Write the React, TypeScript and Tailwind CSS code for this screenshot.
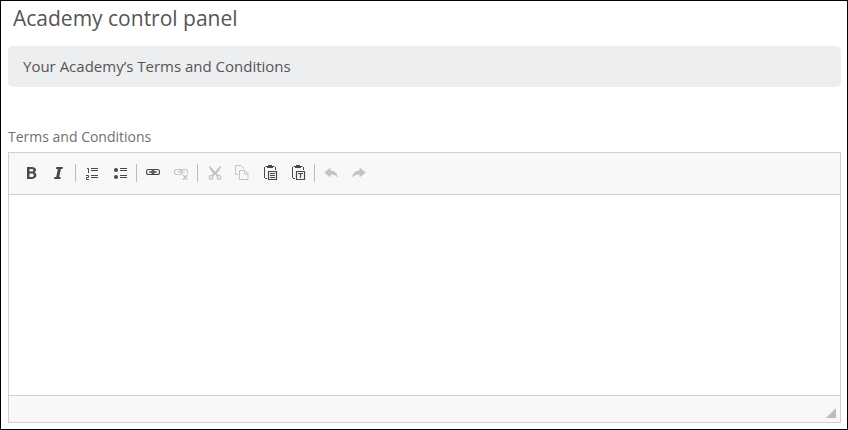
import type { ReactNode } from "react";

interface ToolButtonProps {
  label: string;
  disabled?: boolean;
  children: ReactNode;
}

function ToolButton({ label, disabled, children }: ToolButtonProps) {
  return (
    <button
      type="button"
      aria-label={label}
      disabled={disabled}
      className={
        disabled
          ? "flex h-6 w-7 items-center justify-center text-[#c3c3c3]"
          : "flex h-6 w-7 items-center justify-center text-[#484848]"
      }
    >
      <svg width="16" height="16" viewBox="0 0 16 16" fill="none" stroke="currentColor">
        {children}
      </svg>
    </button>
  );
}

function Separator() {
  return <span className="mx-0.5 h-[18px] w-px bg-[#bcbcbc]" />;
}

function ClipboardShape() {
  return (
    <>
      <path d="M5 1.5H3.5M2.5 2v11M3 13.5h2M11 1.5h1.5M13.5 2v3" />
      <path d="M6 0h4v1h1v2H5V1h1z" fill="currentColor" stroke="none" />
      <path d="M6.5 6.5h8v8h-8z" strokeWidth="1.2" />
    </>
  );
}

function Toolbar() {
  return (
    <div className="flex h-[42px] items-center border-b border-[#d1d1d1] bg-[#f8f8f8] pb-px pl-2">
      <ToolButton label="Bold">
        <path
          d="M4 2h4.4C11.3 2 13 3 13 5c0 1.2-.6 2.1-1.7 2.4 1.300.3 2.100 1.200 2.100 2.700 0 2.300-1.700 3.900-4.500 3.900H4zm2.500 2v2.500h1.900c1.300 0 2-.4 2-1.300S9.700 4 8.300 4zm0 4.500V12h2.200c1.300 0 2.100-.6 2.100-1.800 0-1.100-.8-1.700-2.200-1.700z"
          fill="currentColor"
          fillRule="evenodd"
          stroke="none"
        />
      </ToolButton>
      <div className="-ml-px mr-px">
        <ToolButton label="Italic">
          <path
            d="M6.3 2H13l-.5 2h-1.6L9.2 12h1.6l-.5 2H4l.5-2h1.7L7.9 4H5.900z"
            fill="currentColor"
            stroke="none"
          />
        </ToolButton>
      </div>
      <Separator />
      <ToolButton label="Numbered list">
        <path d="M7 3.500h7M7 5.500h7M7 10.500h7M7 12.500h7" />
        <path d="M3 3.500h1.500V8M2 10.500h2.500v2h-2v2H5" />
      </ToolButton>
      <ToolButton label="Bulleted list">
        <path d="M8 3.500h7M8 5.500h7M8 10.500h7M8 12.500h7" />
        <circle cx="4" cy="5" r="2" fill="currentColor" stroke="none" />
        <circle cx="4" cy="12" r="2" fill="currentColor" stroke="none" />
      </ToolButton>
      <Separator />
      <ToolButton label="Link">
        <rect x="1.5" y="4.5" width="7.500" height="5" rx="2" strokeWidth="1.100" />
        <rect x="7" y="4.5" width="7.500" height="5" rx="2" strokeWidth="1.100" />
        <path d="M4 7h8" strokeWidth="1.300" />
      </ToolButton>
      <ToolButton label="Unlink" disabled>
        <path d="M9 9.500H3.500a2 2 0 0 1-2-2v-1a2 2 0 0 1 2-2h9a2 2 0 0 1 2 2V8.500" strokeWidth="1.100" />
        <path d="M4 7h8M7.500 5v1.500M9 5v1.500M8.500 7.500v2" strokeWidth="1.100" />
        <path d="M10 10l4.500 4.800M14.500 10L10 14.800" strokeWidth="1.500" />
      </ToolButton>
      <Separator />
      <ToolButton label="Cut" disabled>
        <path d="M3 1l1.500.6L9 6.800l4.500-5.200L15 1c-.2 2.400-1.600 4.800-4.300 7.200l1.800 1.900-1.400 1.300L9 9.600l-2.100 1.800-1.400-1.300 1.800-1.900C4.600 5.800 3.200 3.400 3 1z" fill="currentColor" stroke="none" />
        <circle cx="5" cy="12.500" r="1.800" strokeWidth="1.300" />
        <circle cx="13" cy="12.500" r="1.800" strokeWidth="1.300" />
      </ToolButton>
      <ToolButton label="Copy" disabled>
        <path d="M4.500 9.500h-3v-9h5.500l2.500 2.500v1" />
        <path d="M5.500 5.500h5.500l3 3v6H5.500zM10.500 5.500V9H14" />
      </ToolButton>
      <ToolButton label="Paste">
        <ClipboardShape />
        <path d="M8 8.500h5M8 10.500h5M8 12.500h5" />
      </ToolButton>
      <ToolButton label="Paste as plain text">
        <ClipboardShape />
        <path d="M8 8.500h5M10.500 8.500V13" strokeWidth="1.200" />
      </ToolButton>
      <Separator />
      <ToolButton label="Undo" disabled>
        <path d="M1.200 7.500L7.500 2.500v3c4 .2 7 2.500 7.300 7.300-1.800-2.200-3.800-3.200-7.300-3.200v3z" fill="currentColor" stroke="none" />
      </ToolButton>
      <ToolButton label="Redo" disabled>
        <path d="M14.800 7.500L8.500 2.500v3c-4 .2-7 2.500-7.300 7.300 1.800-2.200 3.800-3.200 7.300-3.200v3z" fill="currentColor" stroke="none" />
      </ToolButton>
    </div>
  );
}

export default function App() {
  return (
    <main className="h-[430px] w-[848px] overflow-hidden border border-black bg-white px-[7px] font-['Open_Sans',sans-serif]">
      <h1 className="h-[45px] pl-[5px] pt-px text-[21px] leading-8 text-[#555]">
        Academy control panel
      </h1>
      <div className="flex h-[41px] w-[833px] items-center rounded-[5px] bg-[#edeef0] pl-[15px] text-[15px] text-[#555]">
        Your Academy’s Terms and Conditions
      </div>
      <label className="mt-10 block h-[25px] text-[14px] leading-5 text-[#707070]">
        Terms and Conditions
      </label>
      <section className="flex h-[271px] w-[833px] flex-col border border-[#d1d1d1]">
        <Toolbar />
        <div role="textbox" className="flex-1 bg-white" />
        <footer className="flex h-[27px] items-end justify-end border-t border-[#d1d1d1] bg-[#f8f8f8] pb-1 pr-1">
          <svg width="10" height="10" viewBox="0 0 10 10" fill="#bcbcbc">
            <path d="M10 0v10H0z" />
          </svg>
        </footer>
      </section>
    </main>
  );
}
